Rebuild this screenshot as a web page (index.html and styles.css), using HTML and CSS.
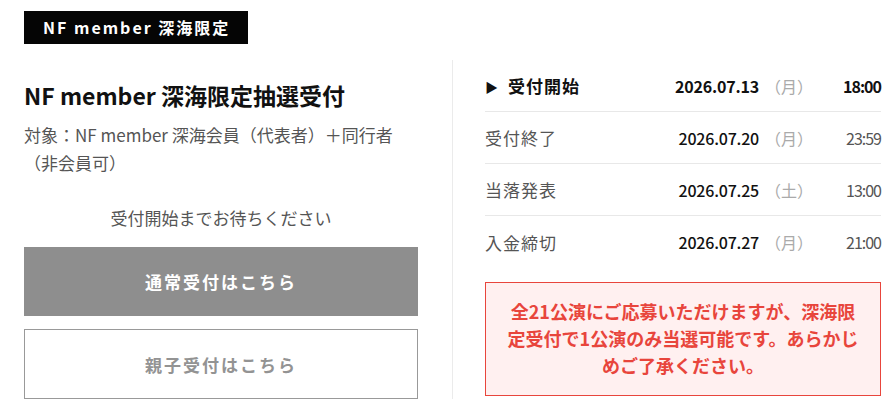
FILE: index.html
```html
<!DOCTYPE html>
<html lang="ja">
<head>
  <meta charset="UTF-8">
  <title>NF member 深海限定抽選受付</title>
  <link rel="stylesheet" href="styles.css">
</head>
<body>

<div class="page">
  <div class="badge">NF member 深海限定</div>

  <div class="entry">
    <div class="entry-info">
      <h2 class="entry-title">NF member 深海限定抽選受付</h2>
      <p class="entry-target">対象：NF member 深海会員（代表者）＋同行者（非会員可）</p>
      <p class="entry-wait">受付開始までお待ちください</p>
      <a class="btn btn-fill">通常受付はこちら</a>
      <a class="btn btn-line">親子受付はこちら</a>
    </div>

    <div class="entry-schedule">
      <ul class="schedule">
        <li class="schedule-row is-current">
          <span class="schedule-label"><span class="mark">&#9654;</span>受付開始</span>
          <span class="schedule-date">2026.07.13</span>
          <span class="schedule-day">（月）</span>
          <span class="schedule-time">18:00</span>
        </li>
        <li class="schedule-row">
          <span class="schedule-label">受付終了</span>
          <span class="schedule-date">2026.07.20</span>
          <span class="schedule-day">（月）</span>
          <span class="schedule-time">23:59</span>
        </li>
        <li class="schedule-row">
          <span class="schedule-label">当落発表</span>
          <span class="schedule-date">2026.07.25</span>
          <span class="schedule-day">（土）</span>
          <span class="schedule-time">13:00</span>
        </li>
        <li class="schedule-row">
          <span class="schedule-label">入金締切</span>
          <span class="schedule-date">2026.07.27</span>
          <span class="schedule-day">（月）</span>
          <span class="schedule-time">21:00</span>
        </li>
      </ul>

      <p class="notice">全21公演にご応募いただけますが、深海限<br>定受付で1公演のみ当選可能です。あらかじ<br>めご了承ください。</p>
    </div>
  </div>
</div>

</body>
</html>
```

FILE: styles.css
```css
* { box-sizing: border-box; }
body { margin: 0; font-family: "Noto Sans CJK JP", "Noto Sans", sans-serif; color: #111; background: #fff; }
.page { padding: 11px 8px 0 24px; }

.badge { display: inline-block; width: 224px; height: 33px; line-height: 33px; padding-left: 19px; background: #050505; color: #fff; font-size: 16px; font-weight: 700; letter-spacing: 2px; }

.entry { display: flex; margin-top: 16px; }
.entry-info { width: 394px; margin-right: 34px; padding-top: 19px; }
.entry-schedule { flex: 1; border-left: 1px solid #ebebeb; padding-left: 32px; }

.entry-title { margin: 0; font-size: 23px; line-height: 33px; font-weight: 700; }
.entry-target { margin: 9px 0 0; font-size: 17px; line-height: 28px; color: #555; }
.entry-wait { margin: 29px 0 0; font-size: 17px; line-height: 24px; color: #555; text-align: center; }

.btn { display: flex; align-items: center; justify-content: center; font-size: 17px; font-weight: 700; letter-spacing: 2px; cursor: pointer; }
.btn-fill { height: 69px; margin-top: 17px; background: #8e8e8e; color: #fff; }
.btn-line { height: 70px; margin-top: 13px; border: 1px solid #999; color: #939393; }

.schedule { list-style: none; margin: 0; padding: 0; }
.schedule-row { display: flex; align-items: center; height: 52px; border-bottom: 1px solid #e8e8e8; font-size: 17px; }
.schedule-row:last-child { border-bottom: none; }
.schedule-label { flex: 1; color: #555; letter-spacing: 1px; }
.schedule-date { font-size: 16px; font-weight: 500; color: #111; letter-spacing: -0.2px; }
.schedule-day { margin-left: 6px; width: 60px; color: #aaa; font-size: 16px; }
.schedule-time { margin-left: auto; width: 56px; text-align: right; font-size: 16px; color: #555; letter-spacing: -1px; }

.is-current .schedule-label,
.is-current .schedule-time { color: #111; font-weight: 700; }
.is-current .schedule-date { font-weight: 700; }
.mark { font-size: 13px; margin-right: 9px; vertical-align: 1px; }

.notice { margin: 14px 0 0; padding: 15px 18px 16px; border: 1px solid #e8453c; background: #fff0f0; color: #e8453c; font-size: 18px; line-height: 27px; font-weight: 700; text-align: center; }
```
